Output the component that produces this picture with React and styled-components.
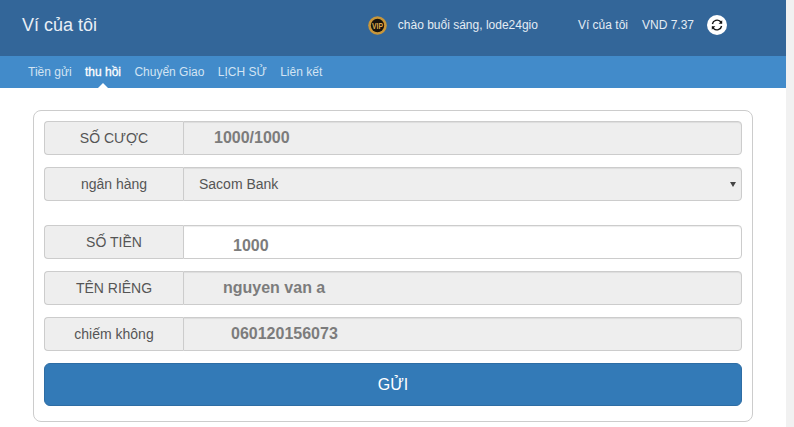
import React from 'react';
import styled, { createGlobalStyle } from 'styled-components';

const GlobalStyle = createGlobalStyle`
  html, body {
    margin: 0;
    padding: 0;
    height: 100%;
    overflow: hidden;
    background: #fff;
    font-family: "Liberation Sans", Arial, sans-serif;
  }
`;

const navItems = ['Tiền gửi', 'thu hồi', 'Chuyển Giao', 'LỊCH SỬ', 'Liên kết'];

const Vip = () => (
  <VipIcon viewBox="0 0 20 20">
    <circle cx="10" cy="10" r="9.8" fill="#c8963a" />
    <circle cx="10" cy="10" r="7" fill="#17130c" />
    <text x="10" y="13.4" textAnchor="middle" fontSize="9.5" fontWeight="700" textLength="11.5" lengthAdjust="spacingAndGlyphs" fontFamily="Liberation Sans" fill="#dcab4c">VIP</text>
  </VipIcon>
);

const Refresh = () => (
  <RefreshIcon viewBox="0 0 20 20">
    <circle cx="10" cy="10" r="10" fill="#fff" />
    <path d="M5.4 9a4.7 4.7 0 0 1 8-2.4L14.6 8" fill="none" stroke="#111" strokeWidth="1.4" />
    <path d="M15.2 5.2v3.6h-3.6z" fill="#111" />
    <path d="M14.6 11a4.7 4.7 0 0 1-8 2.4L5.4 12" fill="none" stroke="#111" strokeWidth="1.4" />
    <path d="M4.8 14.8v-3.6h3.6z" fill="#111" />
  </RefreshIcon>
);

const App = () => {
  return (
    <Page>
      <GlobalStyle />
      <Main>
        <Header>
          <Title>Ví của tôi</Title>
          <Account>
            <Vip />
            <Greeting>chào buổi sáng, lode24gio</Greeting>
            <Wallet>Ví của tôi</Wallet>
            <Balance>VND 7.37</Balance>
            <Refresh />
          </Account>
        </Header>
        <Nav>
          {navItems.map((item, i) => (
            <NavItem key={item} $active={i === 1}>{item}</NavItem>
          ))}
        </Nav>
        <Card>
          <Row>
            <Label>SỐ CƯỢC</Label>
            <Value $indent={30} readOnly disabled value="1000/1000" />
          </Row>
          <Row>
            <Label>ngân hàng</Label>
            <SelectWrap>
              <BankSelect disabled defaultValue="Sacom Bank">
                <option>Sacom Bank</option>
              </BankSelect>
              <Caret />
            </SelectWrap>
          </Row>
          <Row $spaced>
            <Label>SỐ TIỀN</Label>
            <Value $indent={49} $low $editable readOnly value="1000" />
          </Row>
          <Row>
            <Label>TÊN RIÊNG</Label>
            <Value $indent={39} readOnly disabled value="nguyen van a" />
          </Row>
          <Row>
            <Label>chiếm không</Label>
            <Value $indent={47} readOnly disabled value="060120156073" />
          </Row>
          <Submit type="button">GỬI</Submit>
        </Card>
      </Main>
      <Scrollbar />
    </Page>
  );
};

export default App;

const Page = styled.div`
  display: flex;
  height: 427px;
  overflow: hidden;
`;

const Main = styled.div`
  flex: 1;
  min-width: 0;
`;

const Scrollbar = styled.div`
  width: 8px;
  background: #f1f1f1;
`;

const Header = styled.header`
  height: 56px;
  box-sizing: border-box;
  padding: 0 59px 6px 22px;
  display: flex;
  align-items: center;
  justify-content: space-between;
  background: #336699;
`;

const Title = styled.h1`
  margin: 0;
  font-size: 18px;
  font-weight: 400;
  color: #e8eff6;
`;

const Account = styled.div`
  display: flex;
  align-items: center;
  font-size: 12px;
  color: #e3ecf4;
`;

const VipIcon = styled.svg`
  width: 19px;
  height: 19px;
  margin-right: 11px;
`;

const Greeting = styled.span`
  margin-right: 40px;
`;

const Wallet = styled.span`
  margin-right: 14px;
`;

const Balance = styled.span`
  margin-right: 13px;
`;

const RefreshIcon = styled.svg`
  width: 20px;
  height: 20px;
`;

const Nav = styled.nav`
  height: 32px;
  box-sizing: border-box;
  padding-left: 28px;
  display: flex;
  gap: 13.4px;
  align-items: center;
  background: #428bca;
`;

const NavItem = styled.a`
  position: relative;
  font-size: 12px;
  line-height: 32px;
  color: ${p => (p.$active ? '#fff' : '#d3e4f3')};
  -webkit-text-stroke: ${p => (p.$active ? '0.3px #fff' : '0')};

  &::after {
    content: '';
    display: ${p => (p.$active ? 'block' : 'none')};
    position: absolute;
    left: 50%;
    bottom: 0;
    margin-left: -5px;
    border: 5px solid transparent;
    border-top: 0;
    border-bottom-color: #fff;
  }
`;

const Card = styled.form`
  width: 720px;
  height: 312px;
  box-sizing: border-box;
  margin: 22px 0 0 33px;
  padding: 10px;
  border: 1px solid #ccc;
  border-radius: 8px;
  display: flex;
  flex-direction: column;
  gap: 12px;
`;

const Row = styled.div`
  display: flex;
  height: 34px;
  flex: none;
  margin-top: ${p => (p.$spaced ? '12px' : '0')};
`;

const Label = styled.span`
  width: 139px;
  flex: none;
  box-sizing: border-box;
  padding-bottom: 1px;
  display: flex;
  align-items: center;
  justify-content: center;
  background: #eee;
  border: 1px solid #ccc;
  border-right: 0;
  border-radius: 4px 0 0 4px;
  font-size: 14px;
  color: #555;
`;

const Value = styled.input`
  flex: 1;
  min-width: 0;
  box-sizing: border-box;
  height: 34px;
  margin: 0;
  padding: ${p => (p.$low ? '8px' : '0')} 12px 0 ${p => p.$indent}px;
  background: ${p => (p.$editable ? '#fff' : '#eee')};
  border: 1px solid #ccc;
  border-radius: 0 4px 4px 0;
  box-shadow: inset 0 1px 1px rgba(0, 0, 0, 0.075);
  font-family: inherit;
  font-size: 16px;
  font-weight: 700;
  color: #7c7c7c;
  opacity: 1;
  outline: none;

  &:disabled {
    color: #7c7c7c;
    -webkit-text-fill-color: #7c7c7c;
  }
`;

const SelectWrap = styled.div`
  position: relative;
  flex: 1;
  min-width: 0;
`;

const BankSelect = styled.select`
  width: 100%;
  height: 34px;
  box-sizing: border-box;
  padding: 0 12px 0 15px;
  appearance: none;
  background: #eee;
  border: 1px solid #ccc;
  border-radius: 0 4px 4px 0;
  box-shadow: inset 0 1px 1px rgba(0, 0, 0, 0.075);
  font-family: inherit;
  font-size: 14px;
  color: #555;
  opacity: 1;
`;

const Caret = styled.span`
  position: absolute;
  right: 6px;
  top: 15px;
  border: 3px solid transparent;
  border-bottom: 0;
  border-top: 5px solid #444;
`;

const Submit = styled.button`
  height: 43px;
  flex: none;
  background: #337ab7;
  border: 1px solid #2e6da4;
  border-radius: 6px;
  font-family: inherit;
  font-size: 16px;
  color: #fff;
`;
